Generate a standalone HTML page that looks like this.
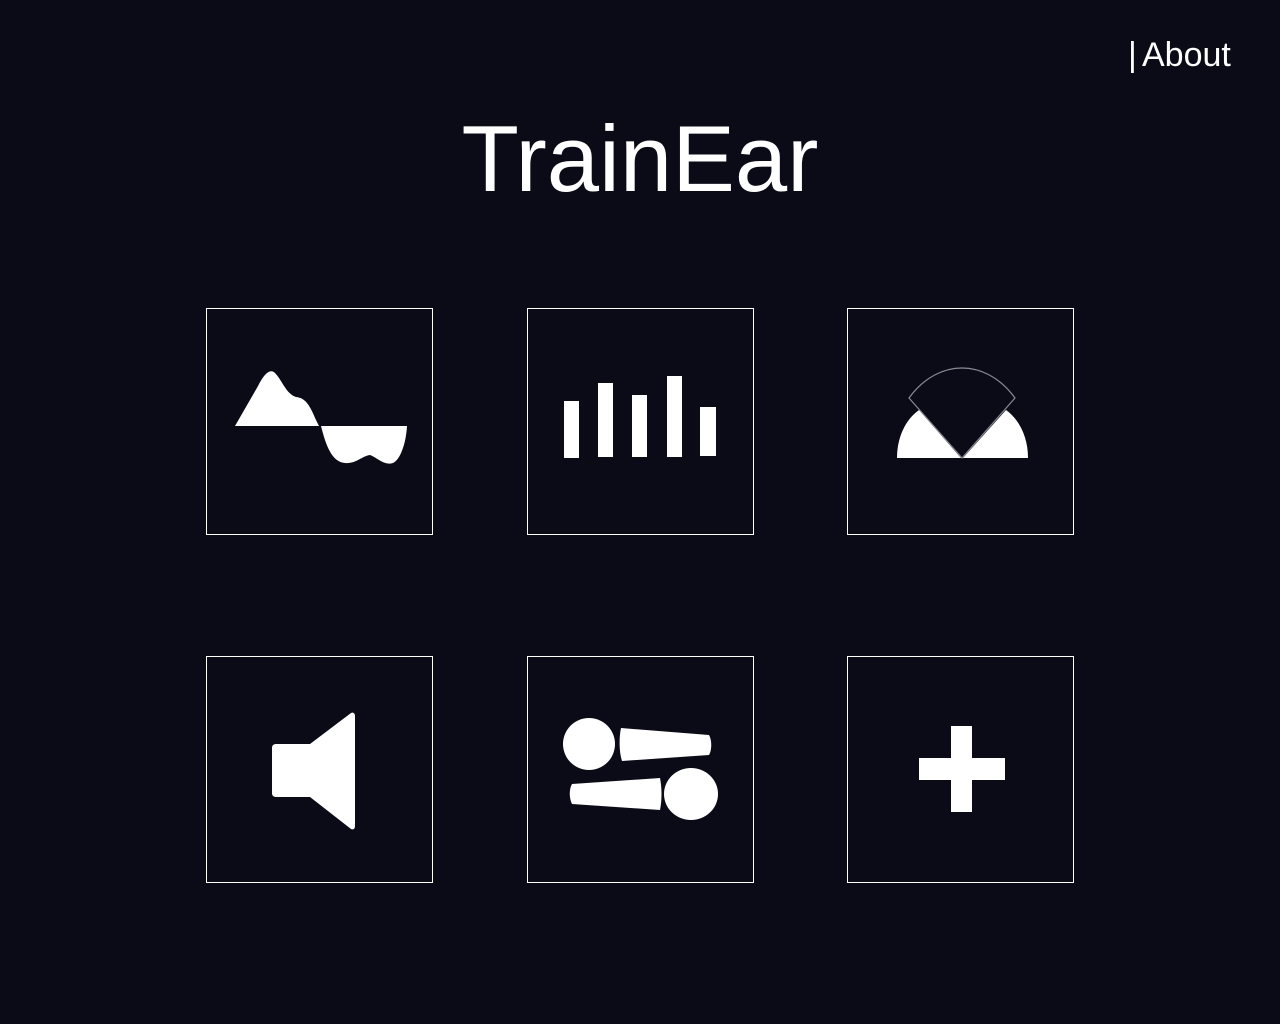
<!DOCTYPE html>
<html><head><meta charset="utf-8"><style>
html,body{margin:0;padding:0;background:#0a0b16;width:1280px;height:1024px;overflow:hidden}
svg{display:block}
text{font-family:"Liberation Sans",sans-serif;fill:#fff}
</style></head><body>
<svg width="1280" height="1024" viewBox="0 0 1280 1024">
<rect width="1280" height="1024" fill="#0a0b16"/>
<text x="1128" y="66" font-size="34">|</text>
<text x="1142" y="66" font-size="34">About</text>
<text x="640" y="191" font-size="94" text-anchor="middle">TrainEar</text>
<g fill="none" stroke="#fff" stroke-width="1">
<rect x="206.5" y="308.5" width="226" height="226"/>
<rect x="527.5" y="308.5" width="226" height="226"/>
<rect x="847.5" y="308.5" width="226" height="226"/>
<rect x="206.5" y="656.5" width="226" height="226"/>
<rect x="527.5" y="656.5" width="226" height="226"/>
<rect x="847.5" y="656.5" width="226" height="226"/>
</g>
<g fill="#fff">
<!-- wave -->
<path d="M235 426 L258 386 C264 374 270 368 275 373 C282 380 286 394 296 397 C306 398 310 406 316 420 L319 426 Z"/>
<path d="M321 426 L407 426 C406 444 400 460 393 463 C384 466 378 458 370 455 C362 456 356 464 345 463 C332 462 326 446 321 426 Z"/>
<!-- bars -->
<rect x="564" y="401" width="15" height="57"/>
<rect x="598" y="383" width="15" height="74"/>
<rect x="632" y="395" width="15" height="62"/>
<rect x="667" y="376" width="15" height="81"/>
<rect x="700" y="407" width="16" height="49"/>
<!-- fan -->
<path d="M897 458 C897 438 905 420 919 410 L961 458 Z"/>
<path d="M1028 458 C1028 438 1020 420 1006 410 L963 458 Z"/>
<!-- speaker -->
<path d="M276 744 L310 744 L351 713 C353 712 355 713 355 716 L355 826 C355 829 353 830 351 829 L310 797 L276 797 C273 797 272 795 272 793 L272 748 C272 746 273 744 276 744 Z"/>
<!-- mics -->
<ellipse cx="589" cy="744" rx="26" ry="26"/>
<path d="M621 728 L709 735 C712 740 712 750 709 755 L622 761 C619 752 619 737 621 728 Z"/>
<ellipse cx="691" cy="794" rx="27" ry="26"/>
<path d="M660 778 L572 784 C569 789 569 798 572 804 L660 810 C662 800 662 788 660 778 Z"/>
<!-- plus -->
<rect x="951" y="726" width="21" height="86"/>
<rect x="919" y="758" width="86" height="22"/>
</g>
<path d="M909 398 C925 376 945 368 962 368 C979 368 999 376 1015 398 L962 458 Z" fill="none" stroke="#8a8a92" stroke-width="1.2"/>
</svg>
</body></html>
